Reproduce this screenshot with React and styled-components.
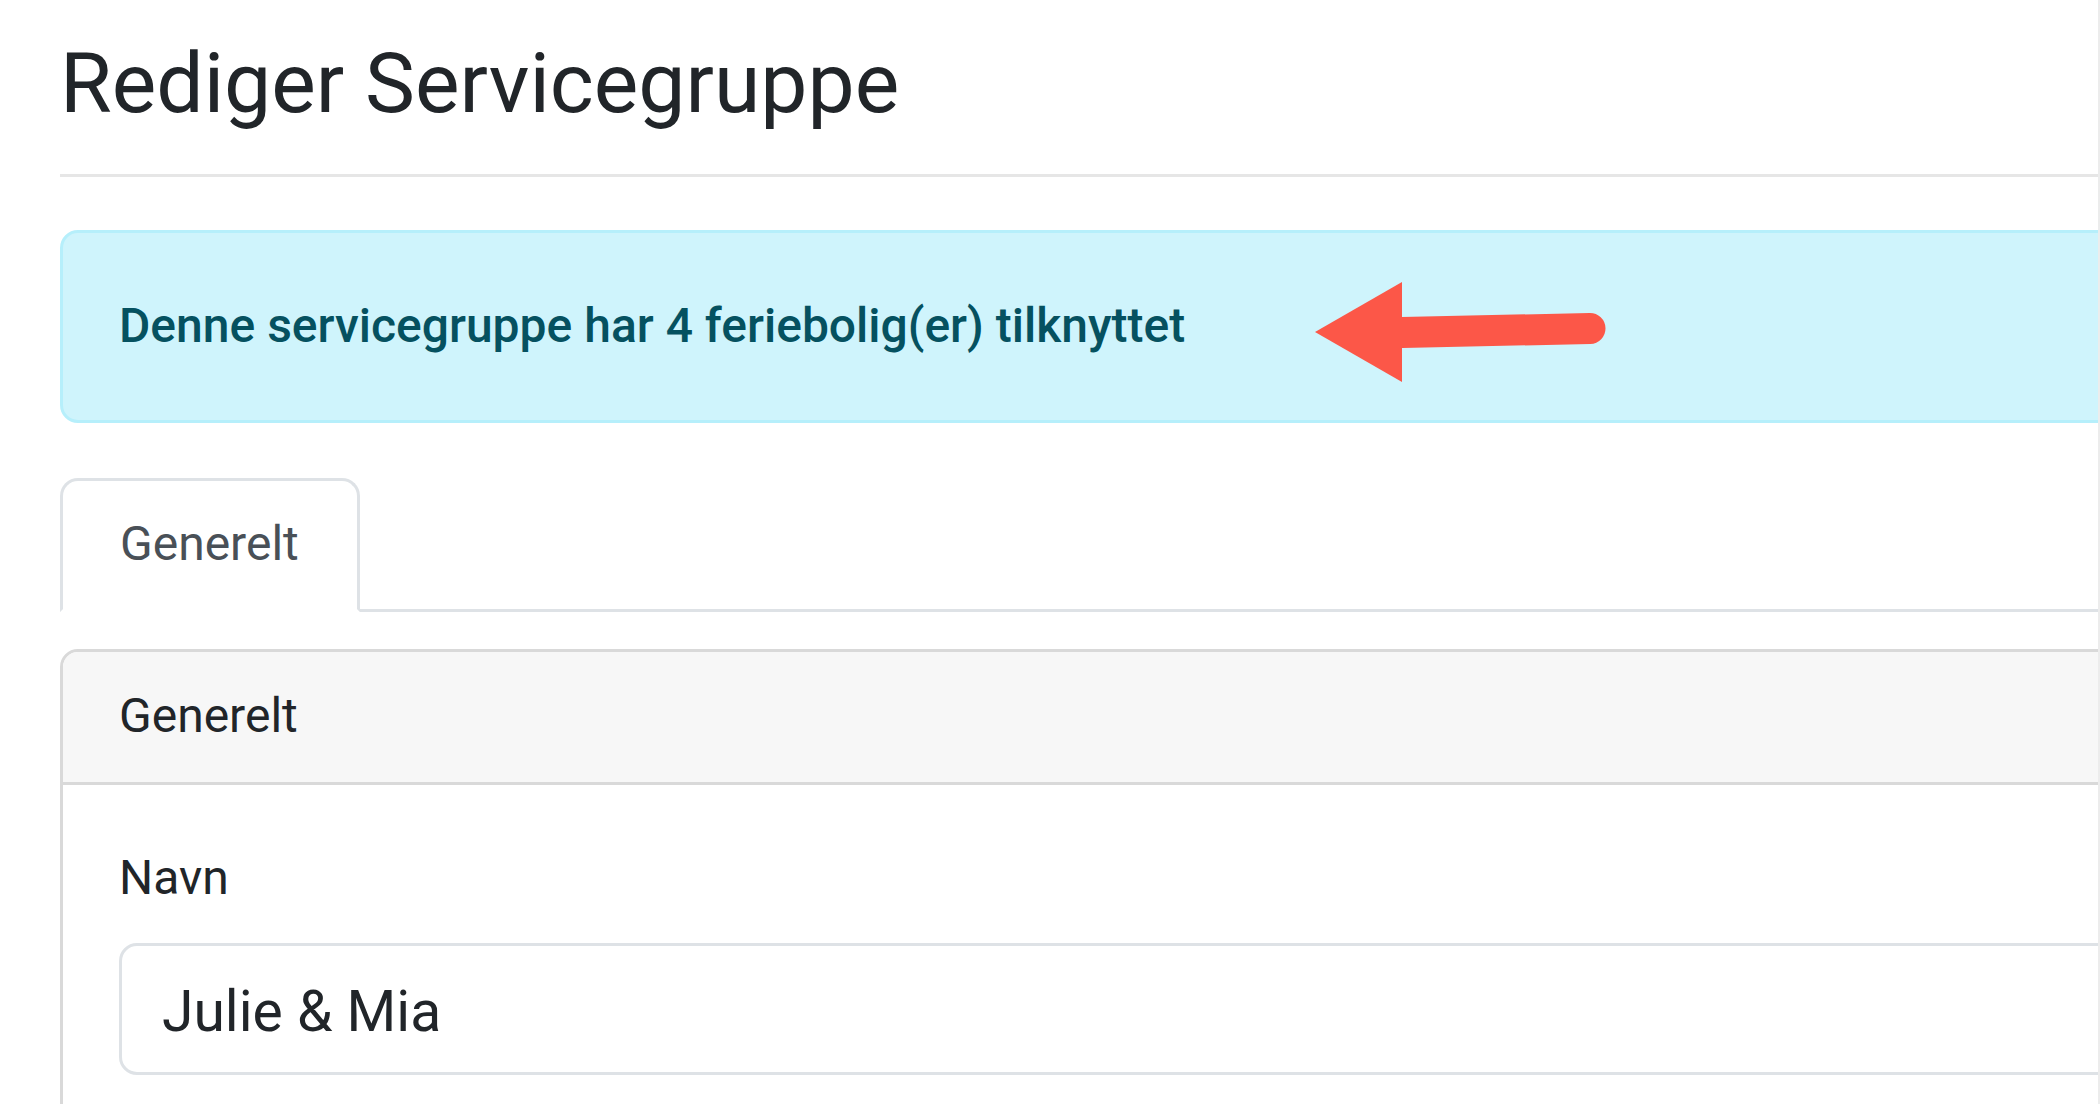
import React from "react";
import styled, { createGlobalStyle } from "styled-components";

const GlobalStyle = createGlobalStyle`
  html, body {
    margin: 0;
    padding: 0;
    background: #ffffff;
  }
  body {
    font-family: Roboto, "Liberation Sans", Arial, sans-serif;
    color: #212529;
  }
  * { box-sizing: border-box; }
`;

const Page = styled.div`
  width: 2100px;
  height: 1104px;
  overflow: hidden;
  padding: 34px 0 0 60px;
  border-right: 2px solid #ececec;
`;

const Content = styled.div`
  width: 2200px;
`;

const Title = styled.h1`
  margin: 0;
  font-size: 84px;
  font-weight: 400;
  line-height: 1.2;
  color: #212529;
  padding-bottom: 39px;
  border-bottom: 3px solid #e6e6e6;
`;

const Alert = styled.div`
  position: relative;
  margin-top: 53px;
  padding: 57px 56px 58px;
  background: #cff4fc;
  border: 3px solid #b6effb;
  border-radius: 18px;
  color: #055160;
  font-size: 48px;
  font-weight: 500;
  line-height: 1.5;
`;

const ArrowMark = styled.svg`
  position: absolute;
  left: 1247px;
  top: 47px;
  width: 300px;
  height: 110px;
  overflow: visible;
`;

const TabBar = styled.div`
  display: flex;
  margin-top: 55px;
  border-bottom: 3px solid #dee2e6;
`;

const Tab = styled.div`
  margin-bottom: -3px;
  padding: 27px 58px 29px 57px;
  font-size: 48px;
  line-height: 1.5;
  color: ${(p) => (p.$active ? "#495057" : "#0d6efd")};
  background: ${(p) => (p.$active ? "#ffffff" : "transparent")};
  border: 3px solid ${(p) => (p.$active ? "#dee2e6" : "transparent")};
  border-bottom-color: ${(p) => (p.$active ? "#ffffff" : "transparent")};
  border-radius: 18px 18px 0 0;
`;

const Card = styled.div`
  margin-top: 37px;
  border: 3px solid #d9d9d9;
  border-radius: 18px;
  background: #ffffff;
  overflow: hidden;
`;

const CardHeader = styled.div`
  padding: 28px 56px 30px;
  background: #f7f7f7;
  border-bottom: 3px solid #d9d9d9;
  font-size: 48px;
  line-height: 1.5;
  color: #212529;
`;

const CardBody = styled.div`
  padding: 57px 56px 80px;
`;

const Label = styled.label`
  display: block;
  font-size: 48px;
  line-height: 1.5;
  color: #212529;
  margin-bottom: 29px;
`;

const TextInput = styled.input`
  display: block;
  width: 100%;
  height: 132px;
  padding: 5px 40px 0;
  font-family: Roboto, "Liberation Sans", Arial, sans-serif;
  font-size: 57px;
  color: #212529;
  background: #ffffff;
  border: 3px solid #dee2e6;
  border-radius: 18px;
  outline: none;
`;

export default function App() {
  return (
    <>
      <GlobalStyle />
      <Page>
        <Content>
          <Title>Rediger Servicegruppe</Title>
          <Alert>
            Denne servicegruppe har 4 feriebolig(er) tilknyttet
            <ArrowMark viewBox="0 0 300 110" aria-hidden="true">
              <line
                x1="92"
                y1="52.5"
                x2="280"
                y2="48.5"
                stroke="#fc5748"
                strokeWidth="31"
                strokeLinecap="round"
              />
              <polygon points="5,52 92,2 92,102" fill="#fc5748" />
            </ArrowMark>
          </Alert>
          <TabBar>
            <Tab $active>Generelt</Tab>
          </TabBar>
          <Card>
            <CardHeader>Generelt</CardHeader>
            <CardBody>
              <Label htmlFor="navn">Navn</Label>
              <TextInput id="navn" defaultValue="Julie & Mia" />
            </CardBody>
          </Card>
        </Content>
      </Page>
    </>
  );
}
